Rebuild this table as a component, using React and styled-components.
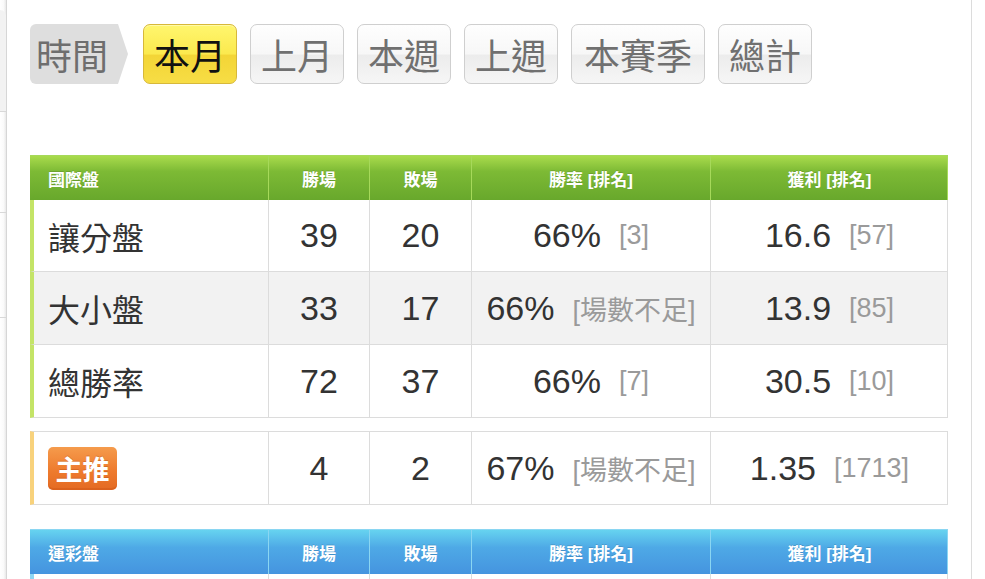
import React from 'react'
import styled, { createGlobalStyle, css } from 'styled-components'

const GlobalStyle = createGlobalStyle`
  * { box-sizing: border-box; }
  body {
    margin: 0;
    background: #fff;
    font-family: "Liberation Sans", "Noto Sans CJK TC", sans-serif;
  }
`

const themes = {
  green: {
    head: 'linear-gradient(to bottom, #a9db4c 0%, #7dba35 35%, #68a82c 100%)',
    line: '#a6d95a',
    mark: '#c4e467',
  },
  blue: {
    head: 'linear-gradient(to bottom, #66d3f0 0%, #4ea9e6 40%, #4594df 100%)',
    line: '#8ad6f2',
    mark: '#8fd6f3',
  },
}

const Page = styled.div`
  display: flex;
  width: 985px;
  height: 579px;
  overflow: hidden;
`

const Sidebar = styled.div`
  width: 7px;
  flex-shrink: 0;
  display: flex;
  flex-direction: column;
  padding-top: 10px;
  background: linear-gradient(to right, #fff 0%, #fafafa 60%, #e9e9e9 100%);
  border-right: 1px solid #d6d6d6;
`

const SideItem = styled.div`
  height: ${p => p.h}px;
  border-bottom: 1px solid #d8d8d8;
  ${p => p.top && css`
    background: #f2f2f2;
    border-radius: 0 6px 0 0;
  `}
`

const Main = styled.div`
  width: 965px;
  flex-shrink: 0;
  border-right: 1px solid #dcdcdc;
  padding: 24px 0 0 23px;
`

const Tabs = styled.div`
  display: flex;
  align-items: center;
  gap: 13px;
  height: 60px;
`

const Tag = styled.div`
  height: 60px;
  width: 98px;
  margin-right: 2px;
  display: flex;
  align-items: center;
  padding-left: 6px;
  font-size: 36px;
  color: #6e6e6e;
  background: #dedede;
  border-radius: 6px 0 0 6px;
  clip-path: polygon(0 0, 88px 0, 98px 50%, 88px 100%, 0 100%);
`

const Tab = styled.div`
  height: 60px;
  padding: 0 ${p => (p.wide ? 12 : 10)}px;
  display: flex;
  align-items: center;
  font-size: 36px;
  border-radius: 7px;
  color: #707070;
  border: 1px solid #cfcfcf;
  background: linear-gradient(to bottom, #fefefe 0%, #f7f7f7 50%, #ececec 52%, #f6f6f6 100%);
  ${p => p.active && css`
    color: #111;
    border-color: #d7b83a;
    background: linear-gradient(to bottom, #fff66e 0%, #fbe94e 50%, #f3d536 52%, #f7dd45 100%);
    box-shadow: inset 0 1px 0 #fffaa8;
  `}
`

const Section = styled.div`
  width: 918px;
  margin-top: ${p => p.mt}px;
`

const HeadRow = styled.div`
  display: grid;
  grid-template-columns: 238px 101px 102px 239px 238px;
  height: 45px;
  background: ${p => themes[p.tone].head};
  border-top: 1px solid ${p => themes[p.tone].line};
  border-right: 1px solid ${p => themes[p.tone].line};
`

const HeadCell = styled.div`
  display: flex;
  align-items: center;
  justify-content: ${p => (p.left ? 'flex-start' : 'center')};
  padding-left: ${p => (p.left ? '18px' : '0')};
  color: #fff;
  font-size: 17px;
  font-weight: bold;
  border-left: ${p => (p.left ? 'none' : `1px solid ${themes[p.tone].line}`)};
  text-shadow: 0 -1px 0 rgba(0, 0, 0, 0.12);
`

const Row = styled.div`
  display: grid;
  grid-template-columns: 234px 101px 102px 239px 238px;
  height: ${p => p.h || 73}px;
  border-left: 4px solid ${p => p.mark};
  border-right: 1px solid #dcdcdc;
  border-bottom: 1px solid #dcdcdc;
  background: ${p => (p.shade ? '#f2f2f2' : '#fff')};
  ${p => p.boxed && css`
    border-top: 1px solid #dcdcdc;
  `}
`

const Cell = styled.div`
  display: flex;
  align-items: center;
  justify-content: ${p => (p.left ? 'flex-start' : 'center')};
  padding-left: ${p => (p.left ? '14px' : '0')};
  border-left: ${p => (p.left ? 'none' : '1px solid #dcdcdc')};
  font-size: ${p => (p.left ? 32 : 34)}px;
  color: #333;
  white-space: nowrap;
`

const Rank = styled.span`
  font-size: 27px;
  color: #9a9a9a;
  margin-left: 18px;
`

const Badge = styled.span`
  display: inline-flex;
  align-items: center;
  justify-content: center;
  width: 69px;
  height: 43px;
  border-radius: 5px;
  font-size: 27px;
  font-weight: bold;
  color: #fff;
  background: linear-gradient(to bottom, #f59b4c 0%, #ee7b2e 55%, #e46a22 100%);
  box-shadow: inset 0 -2px 0 rgba(200, 80, 20, 0.35);
  text-shadow: 0 -1px 0 rgba(150, 60, 10, 0.3);
`

const tabs = ['本月', '上月', '本週', '上週', '本賽季', '總計']
const cols = ['勝場', '敗場', '勝率 [排名]', '獲利 [排名]']

const rows = [
  { name: '讓分盤', win: 39, lose: 20, rate: '66%', rateRank: '[3]', profit: '16.6', profitRank: '[57]' },
  { name: '大小盤', win: 33, lose: 17, rate: '66%', rateRank: '[場數不足]', profit: '13.9', profitRank: '[85]', shade: true },
  { name: '總勝率', win: 72, lose: 37, rate: '66%', rateRank: '[7]', profit: '30.5', profitRank: '[10]' },
]

function Head({ tone, title }) {
  return (
    <HeadRow tone={tone}>
      <HeadCell tone={tone} left>{title}</HeadCell>
      {cols.map(c => <HeadCell key={c} tone={tone}>{c}</HeadCell>)}
    </HeadRow>
  )
}

function DataCells({ r }) {
  return (
    <>
      <Cell>{r.win}</Cell>
      <Cell>{r.lose}</Cell>
      <Cell>{r.rate}<Rank>{r.rateRank}</Rank></Cell>
      <Cell>{r.profit}<Rank>{r.profitRank}</Rank></Cell>
    </>
  )
}

export default function App() {
  return (
    <>
      <GlobalStyle />
      <Page>
        <Sidebar>
          <SideItem h={102} top />
          <SideItem h={101} />
          <SideItem h={105} />
        </Sidebar>
        <Main>
          <Tabs>
            <Tag>時間</Tag>
            {tabs.map((t, i) => (
              <Tab key={t} active={i === 0} wide={t.length > 2}>{t}</Tab>
            ))}
          </Tabs>

          <Section mt={71}>
            <Head tone="green" title="國際盤" />
            {rows.map(r => (
              <Row key={r.name} mark={themes.green.mark} shade={r.shade} h={r.name === '讓分盤' ? 72 : 73}>
                <Cell left>{r.name}</Cell>
                <DataCells r={r} />
              </Row>
            ))}
          </Section>

          <Section mt={13}>
            <Row boxed mark="#f8d27c" h={74}>
              <Cell left><Badge>主推</Badge></Cell>
              <DataCells r={{ win: 4, lose: 2, rate: '67%', rateRank: '[場數不足]', profit: '1.35', profitRank: '[1713]' }} />
            </Row>
          </Section>

          <Section mt={24}>
            <Head tone="blue" title="運彩盤" />
            <Row mark={themes.blue.mark}>
              <Cell left />
              <Cell />
              <Cell />
              <Cell />
              <Cell />
            </Row>
          </Section>
        </Main>
      </Page>
    </>
  )
}
